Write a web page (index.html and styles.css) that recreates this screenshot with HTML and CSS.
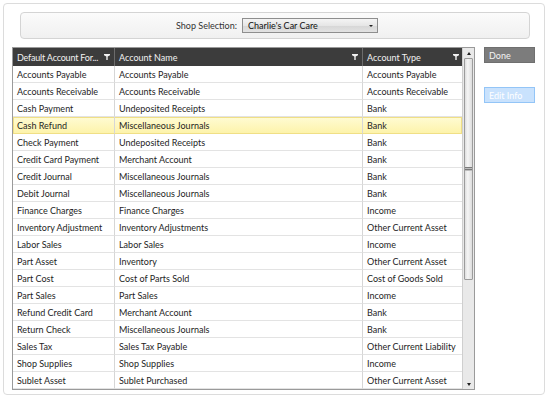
FILE: index.html
```html
<!DOCTYPE html>
<html lang="en">

<head>
    <meta charset="UTF-8" />
    <title>Default Accounts</title>
    <link rel="stylesheet" href="styles.css">
</head>

<body>
    <div class="panel">
        <div class="shop-bar">
            <span class="shop-label">Shop Selection:</span>
            <div class="select">
                <span>Charlie's Car Care</span>
                <span class="caret"></span>
            </div>
        </div>

        <div class="content">
            <div class="grid-wrap">
                <div class="grid">
                    <div class="head">
                        <div class="hcell c1"><span class="htext">Default Account For...</span><svg class="filter" viewBox="0 0 7 7"><path d="M0 0H7V1.6L4.3 2.8V7H2.7V2.8L0 1.6Z" /></svg></div>
                        <div class="hcell c2"><span class="htext">Account Name</span><svg class="filter" viewBox="0 0 7 7"><path d="M0 0H7V1.6L4.3 2.8V7H2.7V2.8L0 1.6Z" /></svg></div>
                        <div class="hcell c3"><span class="htext">Account Type</span><svg class="filter" viewBox="0 0 7 7"><path d="M0 0H7V1.6L4.3 2.8V7H2.7V2.8L0 1.6Z" /></svg></div>
                    </div>
                    <div class="row"><div class="cell">Accounts Payable</div><div class="cell">Accounts Payable</div><div class="cell">Accounts Payable</div></div>
                    <div class="row"><div class="cell">Accounts Receivable</div><div class="cell">Accounts Receivable</div><div class="cell">Accounts Receivable</div></div>
                    <div class="row"><div class="cell">Cash Payment</div><div class="cell">Undeposited Receipts</div><div class="cell">Bank</div></div>
                    <div class="row selected"><div class="cell">Cash Refund</div><div class="cell">Miscellaneous Journals</div><div class="cell">Bank</div></div>
                    <div class="row"><div class="cell">Check Payment</div><div class="cell">Undeposited Receipts</div><div class="cell">Bank</div></div>
                    <div class="row"><div class="cell">Credit Card Payment</div><div class="cell">Merchant Account</div><div class="cell">Bank</div></div>
                    <div class="row"><div class="cell">Credit Journal</div><div class="cell">Miscellaneous Journals</div><div class="cell">Bank</div></div>
                    <div class="row"><div class="cell">Debit Journal</div><div class="cell">Miscellaneous Journals</div><div class="cell">Bank</div></div>
                    <div class="row"><div class="cell">Finance Charges</div><div class="cell">Finance Charges</div><div class="cell">Income</div></div>
                    <div class="row"><div class="cell">Inventory Adjustment</div><div class="cell">Inventory Adjustments</div><div class="cell">Other Current Asset</div></div>
                    <div class="row"><div class="cell">Labor Sales</div><div class="cell">Labor Sales</div><div class="cell">Income</div></div>
                    <div class="row"><div class="cell">Part Asset</div><div class="cell">Inventory</div><div class="cell">Other Current Asset</div></div>
                    <div class="row"><div class="cell">Part Cost</div><div class="cell">Cost of Parts Sold</div><div class="cell">Cost of Goods Sold</div></div>
                    <div class="row"><div class="cell">Part Sales</div><div class="cell">Part Sales</div><div class="cell">Income</div></div>
                    <div class="row"><div class="cell">Refund Credit Card</div><div class="cell">Merchant Account</div><div class="cell">Bank</div></div>
                    <div class="row"><div class="cell">Return Check</div><div class="cell">Miscellaneous Journals</div><div class="cell">Bank</div></div>
                    <div class="row"><div class="cell">Sales Tax</div><div class="cell">Sales Tax Payable</div><div class="cell">Other Current Liability</div></div>
                    <div class="row"><div class="cell">Shop Supplies</div><div class="cell">Shop Supplies</div><div class="cell">Income</div></div>
                    <div class="row"><div class="cell">Sublet Asset</div><div class="cell">Sublet Purchased</div><div class="cell">Other Current Asset</div></div>
                </div>
                <div class="scrollbar">
                    <div class="arrow up"></div>
                    <div class="track">
                        <div class="thumb"><span class="grip"></span></div>
                    </div>
                    <div class="arrow down"></div>
                </div>
            </div>

            <div class="actions">
                <button class="btn done">Done</button>
                <button class="btn edit">Edit Info</button>
            </div>
        </div>
    </div>
</body>

</html>
```

FILE: styles.css
```css
:root {
    --text: #1e1e1e;
    --line: #e3e3e3;
    --col-line: #d6d6d6;
    --head: #3c3c3c;
}

body {
    margin: 0;
    background: #ffffff;
    font-family: Lato, "Open Sans", sans-serif;
    font-size: 9px;
    color: var(--text);
}

.panel {
    margin: 3px;
    width: 542px;
    height: 392px;
    border: 1px solid #dcdcdc;
    border-radius: 4px;
    padding: 8px 8px 0 8px;
    box-sizing: border-box;
}

/* Shop selection bar */
.shop-bar {
    margin: 0 6px 0 8px;
    height: 27px;
    border: 1px solid #d4d4d4;
    border-radius: 4px;
    background: linear-gradient(#fbfbfb, #f0f0f0);
    box-sizing: border-box;
    display: flex;
    align-items: center;
    padding-left: 155px;
}

.shop-label {
    width: 66px;
    font-size: 9px;
    color: #333;
}

.select {
    width: 136px;
    height: 15px;
    box-sizing: border-box;
    border: 1px solid #8e8e8e;
    background: linear-gradient(#f4f4f4 0%, #e6e6e6 50%, #d6d6d6 51%, #e2e2e2 100%);
    display: flex;
    align-items: center;
    justify-content: space-between;
    padding: 0 4px 0 5px;
    font-size: 9px;
    color: #111;
}

.caret {
    width: 0;
    height: 0;
    border-left: 2px solid transparent;
    border-right: 2px solid transparent;
    border-top: 2px solid #222;
}

/* Grid + buttons */
.content {
    display: flex;
    gap: 9px;
    margin-top: 8px;
}

.grid-wrap {
    display: flex;
    width: 463px;
    height: 343px;
    border: 1px solid #9a9a9a;
    box-sizing: border-box;
}

.grid {
    width: 450px;
    overflow: hidden;
}

.head,
.row {
    display: grid;
    grid-template-columns: 102px 248px 100px;
}

.head {
    height: 18px;
    background: var(--head);
}

.hcell {
    color: #f2f2f2;
    font-size: 9px;
    display: flex;
    align-items: center;
    justify-content: space-between;
    padding: 0 4px 0 4px;
    border-right: 1px solid #6c6c6c;
}

.hcell.c1 .htext {
    letter-spacing: -0.2px;
}

.hcell.c3 {
    border-right: none;
}

.filter {
    flex: none;
    width: 6px;
    height: 6px;
    fill: #f2f2f2;
}

.row {
    height: 17px;
}

.cell {
    display: flex;
    align-items: center;
    padding-left: 4px;
    border-bottom: 1px solid var(--line);
    border-right: 1px solid var(--col-line);
    white-space: nowrap;
}

.cell:last-child {
    border-right: none;
}

.row.selected {
    background: linear-gradient(#fffbd4, #fdf3a8);
    box-shadow: inset 0 0 0 1px #f0df86;
}

.row.selected .cell {
    border-bottom-color: transparent;
}

/* Scrollbar */
.scrollbar {
    width: 11px;
    display: flex;
    flex-direction: column;
    background: #e9e9e9;
    border-left: 1px solid #cfcfcf;
}

.arrow {
    height: 10px;
    display: flex;
    align-items: center;
    justify-content: center;
}

.arrow::after {
    content: "";
    border-left: 2px solid transparent;
    border-right: 2px solid transparent;
}

.arrow.up::after {
    border-bottom: 3px solid #222;
}

.arrow.down::after {
    border-top: 3px solid #222;
}

.track {
    flex: 1;
    padding: 0 1px;
}

.thumb {
    height: 220px;
    border: 1px solid #9c9c9c;
    border-radius: 1px;
    background: linear-gradient(90deg, #dedede, #f6f6f6 40%, #dcdcdc);
    display: flex;
    align-items: center;
    justify-content: center;
}

.grip {
    width: 7px;
    height: 4px;
    background: repeating-linear-gradient(#7a7a7a 0 1px, #bdbdbd 1px 2px);
}

.actions {
    display: flex;
    flex-direction: column;
    gap: 24px;
    width: 51px;
}

.btn {
    font-family: Lato, "Open Sans", sans-serif;
    font-size: 9px;
    height: 16px;
    text-align: left;
    padding: 0 4px;
    cursor: pointer;
}

.btn.done {
    background: #7c7c7c;
    border: 1px solid #6f6f6f;
    color: #f4f4f4;
}

.btn.edit {
    background: #c9e2fd;
    border: 1px solid #93c5f7;
    color: #ffffff;
}
```
